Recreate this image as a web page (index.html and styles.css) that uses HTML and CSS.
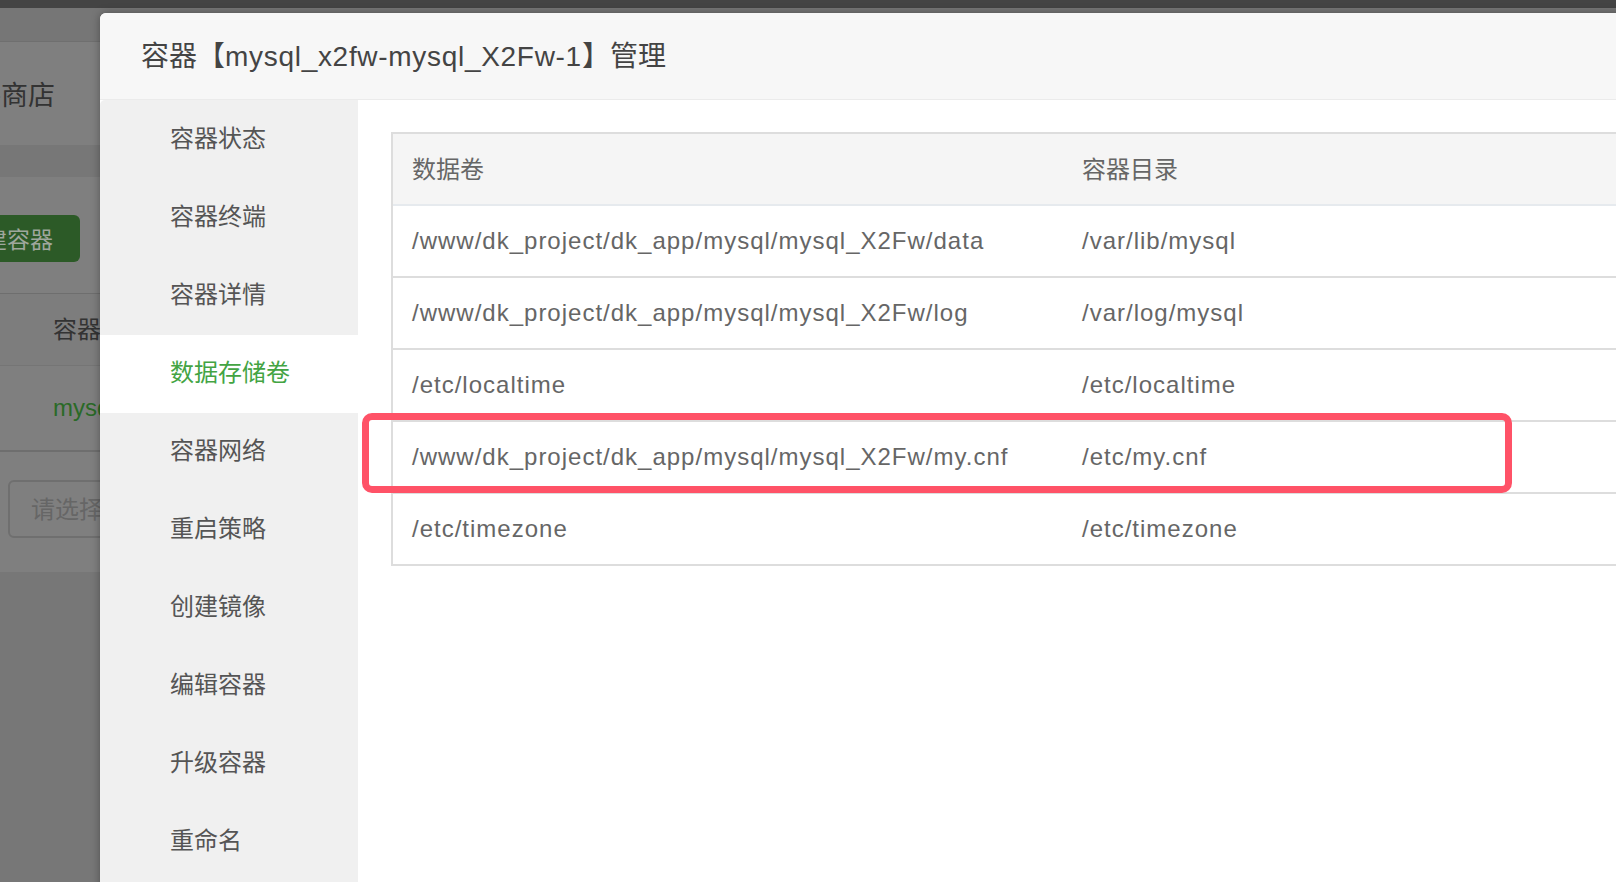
FILE: index.html
```html
<!DOCTYPE html>
<html lang="zh-CN">
<head>
<meta charset="utf-8">
<title>容器管理</title>
<link rel="stylesheet" href="styles.css">
</head>
<body>
<div class="topbar"></div>
<div class="page">
  <div class="pg-band"></div>
  <div class="pg-store"><span class="pg-store-text">软件商店</span></div>
  <div class="pg-band pg-band-2"></div>
  <div class="pg-toolbar"><div class="pg-btn">创建容器</div></div>
  <div class="pg-th">容器</div>
  <div class="pg-td">mysql</div>
  <div class="pg-pager"><div class="pg-select">请选择</div></div>
  <div class="pg-rest"></div>
</div>

<div class="modal">
  <div class="modal-header"><span class="title">容器【<span class="title-latin">mysql_x2fw-mysql_X2Fw-1</span>】管理</span></div>
  <div class="modal-body">
    <ul class="side-menu">
      <li class="side-item">容器状态</li>
      <li class="side-item">容器终端</li>
      <li class="side-item">容器详情</li>
      <li class="side-item active">数据存储卷</li>
      <li class="side-item">容器网络</li>
      <li class="side-item">重启策略</li>
      <li class="side-item">创建镜像</li>
      <li class="side-item">编辑容器</li>
      <li class="side-item">升级容器</li>
      <li class="side-item">重命名</li>
    </ul>
    <div class="content">
      <div class="vol-table">
        <div class="vrow vhead">
          <div class="vcell c1">数据卷</div>
          <div class="vcell c2">容器目录</div>
        </div>
        <div class="vrow">
          <div class="vcell c1">/www/dk_project/dk_app/mysql/mysql_X2Fw/data</div>
          <div class="vcell c2">/var/lib/mysql</div>
        </div>
        <div class="vrow">
          <div class="vcell c1">/www/dk_project/dk_app/mysql/mysql_X2Fw/log</div>
          <div class="vcell c2">/var/log/mysql</div>
        </div>
        <div class="vrow">
          <div class="vcell c1">/etc/localtime</div>
          <div class="vcell c2">/etc/localtime</div>
        </div>
        <div class="vrow marked">
          <div class="vcell c1">/www/dk_project/dk_app/mysql/mysql_X2Fw/my.cnf</div>
          <div class="vcell c2">/etc/my.cnf</div>
          <div class="highlight"></div>
        </div>
        <div class="vrow">
          <div class="vcell c1">/etc/timezone</div>
          <div class="vcell c2">/etc/timezone</div>
        </div>
      </div>
    </div>
  </div>
</div>
</body>
</html>
```

FILE: styles.css
```css
* { box-sizing: border-box; }

html, body {
  margin: 0;
  padding: 0;
  width: 1616px;
  height: 882px;
  overflow: hidden;
  background: #777777;
  font-family: "Liberation Sans", "Noto Sans CJK SC", sans-serif;
}

.topbar {
  height: 8px;
  background: #444444;
}

/* dimmed page behind the dialog */
.page {
  width: 100%;
  overflow: hidden;
}

.pg-band {
  height: 34px;
  background: #767676;
  border-bottom: 1px solid #6f6f6f;
}

.pg-band-2 {
  height: 32px;
  border-bottom: none;
  background: #777777;
}

.pg-store {
  height: 103px;
  background: #7f7f7f;
  display: flex;
  align-items: center;
  overflow: hidden;
  white-space: nowrap;
  font-size: 27px;
  color: #333333;
  padding-bottom: 1px;
}

.pg-store-text {
  margin-left: -53px;
}

.pg-toolbar {
  height: 117px;
  background: #7f7f7f;
  border-bottom: 1px solid #6e6e6e;
  padding-top: 38px;
}

.pg-btn {
  width: 80px;
  height: 47px;
  background: #2c5a27;
  border-radius: 0 6px 6px 0;
  display: flex;
  align-items: center;
  justify-content: flex-end;
  padding-right: 27px;
  padding-bottom: 1px;
  overflow: hidden;
  white-space: nowrap;
  font-size: 23px;
  color: #9fa79d;
}

.pg-th {
  height: 72px;
  background: #7d7d7d;
  border-bottom: 1px solid #757575;
  display: flex;
  align-items: center;
  padding-left: 53px;
  padding-bottom: 4px;
  font-size: 24px;
  color: #333333;
}

.pg-td {
  height: 86px;
  background: #7f7f7f;
  border-bottom: 2px solid #6e6e6e;
  display: flex;
  align-items: center;
  padding-left: 53px;
  font-size: 24px;
  color: #2a6a27;
}

.pg-pager {
  height: 120px;
  background: #7f7f7f;
  padding: 28px 0 0 8px;
}

.pg-select {
  width: 200px;
  height: 58px;
  border: 2px solid #6f6f6f;
  border-radius: 6px;
  display: flex;
  align-items: center;
  padding-left: 21px;
  padding-bottom: 4px;
  font-size: 24px;
  color: #666666;
}

.pg-rest {
  height: 320px;
  background: #777777;
}

/* dialog */
.modal {
  position: absolute;
  left: 100px;
  top: 13px;
  right: -12px;
  bottom: -12px;
  background: #ffffff;
  border-radius: 6px 0 0 0;
  box-shadow: 0 0 9px rgba(0, 0, 0, 0.35);
  overflow: hidden;
  display: flex;
  flex-direction: column;
}

.modal-header {
  height: 87px;
  flex: none;
  background: #f7f7f7;
  border-bottom: 1px solid #ebebeb;
  display: flex;
  align-items: center;
  padding-left: 41px;
  padding-bottom: 4px;
  font-size: 28px;
  color: #444444;
  white-space: nowrap;
}

.title-latin {
  letter-spacing: 0.7px;
}

.modal-body {
  flex: 1;
  display: flex;
  min-height: 0;
}

.side-menu {
  list-style: none;
  margin: 0;
  padding: 1px 0 0 0;
  width: 258px;
  flex: none;
  background: #f0f0f0;
  border-top-left-radius: 5px;
}

.side-item {
  height: 78px;
  display: flex;
  align-items: center;
  padding-left: 70px;
  padding-bottom: 7px;
  font-size: 24px;
  color: #555555;
}

.side-item.active {
  background: #ffffff;
  color: #43a443;
}

.content {
  flex: 1;
  padding: 32px 0 0 33px;
  overflow: hidden;
}

.vol-table {
  width: 1400px;
  border-top: 2px solid #dddddd;
  border-left: 2px solid #dddddd;
}

.vrow {
  position: relative;
  display: flex;
  height: 72px;
  border-bottom: 2px solid #dddddd;
  background: #ffffff;
}

.vrow.vhead {
  background: #f5f5f5;
  border-bottom-color: #e6eaee;
}

.vcell {
  display: flex;
  align-items: center;
  padding-left: 19px;
  font-size: 24px;
  letter-spacing: 1px;
  color: #666666;
  white-space: nowrap;
}

.vhead .vcell {
  letter-spacing: 0;
  padding-bottom: 4px;
}

.c1 { width: 670px; flex: none; }
.c2 { flex: 1; }

.highlight {
  position: absolute;
  left: -31px;
  top: -9px;
  width: 1150px;
  height: 80px;
  border: 7px solid #ff5267;
  border-radius: 10px;
  pointer-events: none;
}
```
